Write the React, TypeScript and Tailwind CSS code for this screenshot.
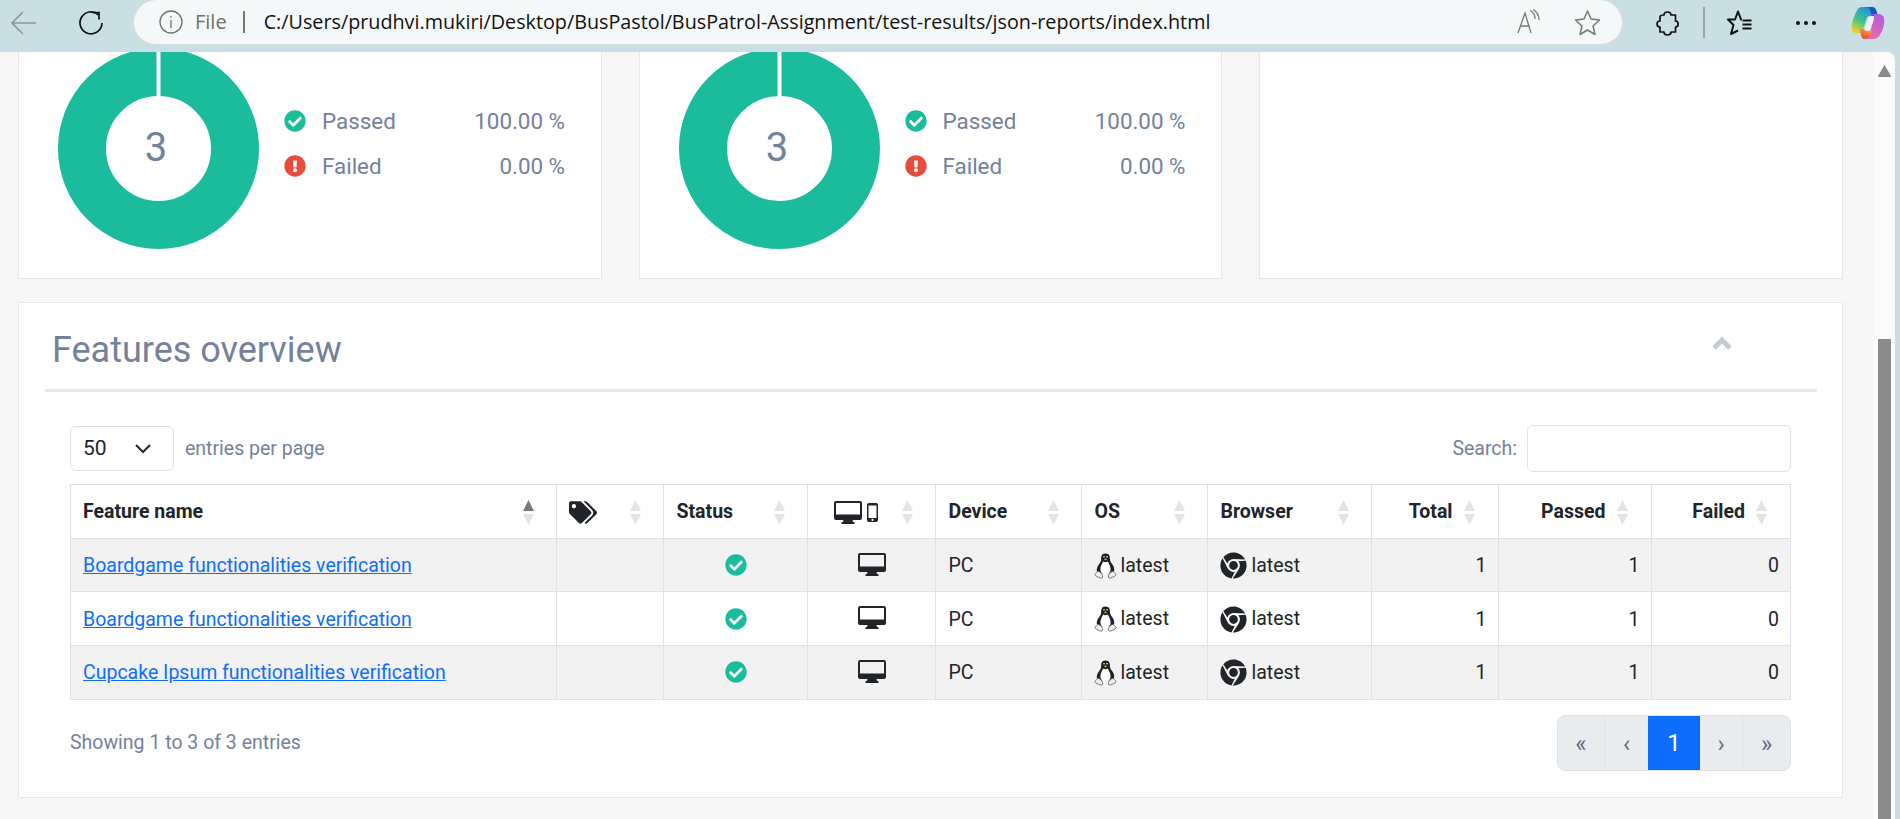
import React from "react";
import { FaCheckCircle, FaExclamationCircle, FaTags, FaChrome } from "react-icons/fa";

const font = { fontFamily: "Roboto, sans-serif" };

function SortArrows({ active = false }: { active?: boolean }) {
  return (
    <span className="flex flex-col gap-[2px] shrink-0">
      <svg width="11" height="12" viewBox="0 0 11 12"><path d="M5.5 0L11 11H0Z" fill={active ? "#7a7a7a" : "#e2e4e4"} /></svg>
      <svg width="11" height="11" viewBox="0 0 11 11"><path d="M0 0H11L5.5 11Z" fill="#e2e4e4" /></svg>
    </span>
  );
}

function Donut() {
  return (
    <svg width="201" height="201" viewBox="0 0 201 201" className="shrink-0">
      <circle cx="100.5" cy="100.5" r="76.5" fill="none" stroke="#1abc9c" strokeWidth="48" />
      <rect x="98.5" y="0" width="4" height="48" fill="#ffffff" />
      <text x="98" y="113" textAnchor="middle" fontSize="40" fill="#73819b" fontFamily="Roboto, sans-serif">3</text>
    </svg>
  );
}

function Legend() {
  return (
    <div className="w-[280px] flex flex-col gap-[18px] text-[22.4px] leading-[27px] text-[#73819b]" style={font}>
      <div className="flex items-center">
        <FaCheckCircle className="text-[#1abc9c] w-[22px] h-[22px] -ml-[1px]" />
        <span className="ml-[16px] flex-1">Passed</span>
        <span>100.00 %</span>
      </div>
      <div className="flex items-center">
        <FaExclamationCircle className="text-[#e74c3c] w-[22px] h-[22px] -ml-[1px]" />
        <span className="ml-[16px] flex-1">Failed</span>
        <span>0.00 %</span>
      </div>
    </div>
  );
}

function ChartCard() {
  return (
    <div className="w-[583.5px] h-[227px] bg-white border-x border-b border-[#e4e7ee] pl-[39px] flex items-start">
      <div className="-mt-[4px] flex items-center">
        <Donut />
        <div className="ml-[26px] -mt-[10px]"><Legend /></div>
      </div>
    </div>
  );
}

const rows = [
  "Boardgame functionalities verification",
  "Boardgame functionalities verification",
  "Cupcake Ipsum functionalities verification",
];

const th = "border border-[#dee2e6] pl-[13px] pr-[12px] pt-[2px] h-[53.7px] font-bold text-[19.5px] leading-[24px] text-[#212529] align-middle";
const td = "border border-[#dee2e6] pl-[13px] pr-[11px] pt-[2px] h-[53.7px] text-[19.5px] leading-[24px] text-[#212529] align-middle";
const first = "border border-[#dee2e6] pl-[12px] pr-[12px] pt-[2px] h-[53.7px] text-[19.5px] leading-[24px] text-[#212529] align-middle";
const firstTh = "border border-[#dee2e6] pl-[12px] pr-[12px] pt-[2px] h-[53.7px] font-bold text-[19.5px] leading-[24px] text-[#212529] align-middle";

function Head({ children, right = false, active = false, isFirst = false }: { children: React.ReactNode; right?: boolean; active?: boolean; isFirst?: boolean }) {
  return (
    <th className={isFirst ? firstTh : th}>
      <div className={`flex items-center ${right ? "justify-end gap-[11px] pr-[11px]" : "justify-between pr-[10px]"}`}>
        {children}
        <SortArrows active={active} />
      </div>
    </th>
  );
}

function Desktop({ className = "" }: { className?: string }) {
  return (
    <svg width="28" height="23" viewBox="0 0 28 23" className={`shrink-0 ${className}`}>
      <path
        fillRule="evenodd"
        fill="#212529"
        d="M2 0H26A2 2 0 0 1 28 2V17A2 2 0 0 1 26 19H18.5L19 21H20.5V23H7.5V21H9L9.5 19H2A2 2 0 0 1 0 17V2A2 2 0 0 1 2 0ZM2 2V13.5H26V2Z"
      />
    </svg>
  );
}

function Phone() {
  return (
    <svg width="11" height="19" viewBox="0 0 11 19" className="shrink-0">
      <path
        fillRule="evenodd"
        fill="#212529"
        d="M2 0H9A2 2 0 0 1 11 2V17A2 2 0 0 1 9 19H2A2 2 0 0 1 0 17V2A2 2 0 0 1 2 0ZM1.5 2.5V15H9.5V2.5ZM5.5 15.8A1.1 1.1 0 1 0 5.5 18A1.1 1.1 0 1 0 5.5 15.8Z"
      />
    </svg>
  );
}

function Tux() {
  return (
    <svg width="23" height="26" viewBox="0 0 23 26" className="shrink-0">
      <path d="M11.5 0.5C7.5 0.5 7 3.5 7.2 6.5C7.3 9 4.8 11 3.6 13.5C2.5 16 2.3 18 4 20.5H19C20.7 18 20.5 15.5 19.4 13C18.2 10.5 15.8 9 15.9 6C16 3.5 15.5 0.5 11.5 0.5Z" fill="#1d2024" />
      <path d="M9.2 8.5C8 11 6.6 13 6.4 16C6.3 18.5 7.8 21.5 11.5 21.5C15.2 21.5 16.7 18.5 16.6 16C16.4 13 15 11 13.8 8.5C12.4 9.5 10.6 9.5 9.2 8.5Z" fill="#ffffff" />
      <path d="M9.8 6.2L11.5 5.2L13.2 6.2L11.5 7.6Z" fill="#c9a227" />
      <circle cx="10" cy="3.8" r="0.8" fill="#ffffff" />
      <circle cx="13" cy="3.8" r="0.8" fill="#ffffff" />
      <path d="M3.5 18.5C2.5 20 1 20.5 1 21.5C1 23 4 24 6.5 25C8 25.5 9 24.5 8.6 23C8 21 6 18 3.5 18.5Z" fill="#f2f0e6" stroke="#4a5a70" strokeWidth="0.8" />
      <path d="M19.5 18.5C20.5 20 22 20.5 22 21.5C22 23 19 24 16.5 25C15 25.5 14 24.5 14.4 23C15 21 17 18 19.5 18.5Z" fill="#f2f0e6" stroke="#4a5a70" strokeWidth="0.8" />
    </svg>
  );
}

function Copilot() {
  return (
    <svg width="34" height="32" viewBox="0 0 34 32" className="ml-[34px]">
      <defs>
        <linearGradient id="cpa" x1="0.7" y1="0" x2="0.2" y2="1"><stop offset="0" stopColor="#1c8fe8" /><stop offset="0.55" stopColor="#3fc28a" /><stop offset="1" stopColor="#f5d02f" /></linearGradient>
        <linearGradient id="cpb" x1="0.8" y1="0" x2="0.3" y2="1"><stop offset="0" stopColor="#b35be0" /><stop offset="1" stopColor="#f06aa6" /></linearGradient>
        <linearGradient id="cpc" x1="0.8" y1="0" x2="0.2" y2="1"><stop offset="0" stopColor="#f9a03f" /><stop offset="1" stopColor="#ea3f36" /></linearGradient>
      </defs>
      <path d="M11 0H21C23 0 24.5 1 25 3L27 9H19C17 9 16 10 15.5 12L11.5 24C11 25.5 9.5 26 8 26H5C2.5 26 0.5 24 0.5 21C0.5 16 3 9 6 3.5C7 1.5 9 0 11 0Z" fill="url(#cpa)" />
      <path d="M14 0H21C23 0 24.5 1 25 3L27 9H21L19 3C18.5 1 16.5 0 14 0Z" fill="#1656c9" />
      <path d="M20 7H27C30 7 32 8 33 11C34 16 32 24 28.5 28.5C27 30.5 25 32 22.5 32H13C15.5 32 17 30.5 17.5 29L22 15C22.5 13 23 11 23 10C23 8 22 7 20 7Z" fill="url(#cpb)" />
      <path d="M9 22H15L16 25.5C16.5 27 17 31 13 32H12C10 30 9.5 26 9 22Z" fill="url(#cpc)" />
      <path d="M14 24H21C19 29 17.5 32 13 32C15 30 14 27 14 24Z" fill="url(#cpc)" />
      <path d="M18.5 9.5H23.2C22.5 14 20.5 19 19 23.5H13.5C15 19 16.5 13 18.5 9.5Z" fill="#eef3f2" />
    </svg>
  );
}

function App() {
  const chromeFont = { fontFamily: "'Open Sans', sans-serif" };
  return (
    <div className="w-[1900px] h-[819px] overflow-hidden bg-[#c9dfe3] flex flex-col" style={font}>
      <header className="h-[52px] shrink-0 flex items-start bg-[#c9dfe3] relative z-10">
        <div className="w-[133px] h-[45px] flex items-center shrink-0">
          <svg width="26" height="24" viewBox="0 0 26 24" className="ml-[11px]" fill="none" stroke="#8b9a9e" strokeWidth="1.6"><path d="M1 12H25M12 1L1 12L12 23" /></svg>
          <svg width="26" height="26" viewBox="0 0 26 26" className="ml-[41px]" fill="none" stroke="#111" strokeWidth="1.7"><path d="M20.5 4.8A11 11 0 1 0 24 13" /><path d="M14 2.5H21V9.5" /></svg>
        </div>
        <div className="w-[1490px] h-[46px] bg-[#f5f8f9] rounded-r-[23px] rounded-l-[23px] border border-t-0 border-[#d5dcdd] border-b-2 flex items-center shrink-0">
          <svg width="24" height="24" viewBox="0 0 24 24" className="ml-[25px]" fill="none" stroke="#6f6f6f" strokeWidth="1.3"><circle cx="12" cy="12" r="11" /><path d="M12 10V18M12 6V7.6" /></svg>
          <span className="ml-[12px] text-[20px] text-[#6f6f6f]" style={chromeFont}>File</span>
          <span className="ml-[16px] w-[2px] h-[22px] bg-[#777]" />
          <span className="ml-[19px] text-[19.75px] text-[#111]" style={chromeFont}>C:/Users/prudhvi.mukiri/Desktop/BusPastol/BusPatrol-Assignment/test-results/json-reports/index.html</span>
          <span className="flex-1" />
          <svg width="26" height="26" viewBox="0 0 26 26" fill="none" stroke="#777" strokeWidth="1.3"><path d="M2 24L9 4L15 24M4.5 17H13M14 1.5A9 9 0 0 1 19 10M17 0.5A12 12 0 0 1 23 11" /></svg>
          <svg width="27" height="27" viewBox="0 0 27 27" className="ml-[32px] mr-[21px]" fill="none" stroke="#777" strokeWidth="1.5"><path d="M13.5 2L17 10L25.5 11L19 17L21 25.5L13.5 21L6 25.5L8 17L1.5 11L10 10Z" strokeLinejoin="round" /></svg>
        </div>
        <div className="flex-1 h-[45px] flex items-center">
          <svg width="24" height="26" viewBox="0 0 24 26" className="ml-[32px]" fill="none" stroke="#111" strokeWidth="1.7" strokeLinejoin="round"><path d="M9 5C9 1 16 1 16 5H20.5V11C24 11 24 17 20.5 17V22H16C16 26 9 26 9 22H5V17C1 17 1 11 5 11V7C5 5.5 7 5 9 5Z" /></svg>
          <span className="ml-[24px] w-[2px] h-[31px] bg-[#9aa5a8]" />
          <svg width="25" height="25" viewBox="0 0 25 25" className="ml-[22px]" fill="none" stroke="#111" strokeWidth="2" strokeLinejoin="round"><path d="M15 9.5H14L11 1.5L8 9.5H1L6.5 15L4 24L11 20.5" /><path d="M15.5 10.5H24.5M15.5 14.5H24.5M15.5 18.5H24.5" /></svg>
          <svg width="22" height="6" viewBox="0 0 22 6" className="ml-[43px]" fill="#111"><circle cx="3" cy="3" r="2" /><circle cx="11" cy="3" r="2" /><circle cx="19" cy="3" r="2" /></svg>
          <Copilot />
        </div>
      </header>

      <div className="flex-1 flex min-h-0">
        <main className="w-[1873px] bg-[#f6f6f6] pl-[18px] overflow-hidden">
          <div className="flex gap-[37px]">
            <ChartCard />
            <ChartCard />
            <div className="w-[583.5px] h-[227px] bg-white border-x border-b border-[#e4e7ee]" />
          </div>

          <section className="mt-[23px] w-[1825px] h-[496px] bg-white border border-[#e4e7ee] pt-[24px] pl-[26px] pr-[25px]">
            <div className="flex items-start justify-between h-[65px] border-b-[3px] border-[#e4e7ee] pl-[7px]">
              <h2 className="text-[36px] leading-[46px] text-[#73819b] font-normal">Features overview</h2>
              <svg width="20" height="14" viewBox="0 0 20 14" className="mt-[9px] mr-[85px]" fill="none" stroke="#c6cbcf" strokeWidth="5"><path d="M2 12L10 4L18 12" /></svg>
            </div>

            <div className="ml-[25px] w-[1721px]">
              <div className="mt-[33px] flex items-center justify-between h-[47px]">
                <div className="flex items-center">
                  <div className="w-[104px] h-[45px] border border-[#dee2e6] rounded-[6px] flex items-center justify-between pl-[12px] pr-[22px] text-[21px] text-[#212529]">
                    <span>50</span>
                    <svg width="16" height="10" viewBox="0 0 16 10" fill="none" stroke="#212529" strokeWidth="2"><path d="M1 1L8 8L15 1" /></svg>
                  </div>
                  <span className="ml-[11px] text-[19.5px] text-[#73819b]">entries per page</span>
                </div>
                <div className="flex items-center">
                  <span className="text-[19.5px] text-[#73819b]">Search:</span>
                  <div className="ml-[10px] w-[264px] h-[47px] border border-[#dee2e6] rounded-[6px] bg-white" />
                </div>
              </div>

              <table className="mt-[12px] w-[1720px] table-fixed border-collapse">
                <colgroup>
                  <col className="w-[485.5px]" /><col className="w-[107px]" /><col className="w-[144px]" /><col className="w-[128px]" /><col className="w-[146px]" /><col className="w-[126px]" /><col className="w-[164px]" /><col className="w-[127px]" /><col className="w-[153px]" /><col className="w-[139.5px]" />
                </colgroup>
                <thead>
                  <tr className="bg-white">
                    <Head active isFirst><span className="text-left">Feature name</span></Head>
                    <Head><FaTags className="w-[28px] h-[25px] text-[#212529] -ml-[1px]" /></Head>
                    <Head>Status</Head>
                    <Head>
                      <span className="flex items-center gap-[5px] ml-[13px]">
                        <Desktop />
                        <Phone />
                      </span>
                    </Head>
                    <Head>Device</Head>
                    <Head>OS</Head>
                    <Head>Browser</Head>
                    <Head right>Total</Head>
                    <Head right>Passed</Head>
                    <Head right>Failed</Head>
                  </tr>
                </thead>
                <tbody>
                  {rows.map((name, i) => (
                    <tr key={i} className={i % 2 === 0 ? "bg-[#f2f2f2]" : "bg-white"}>
                      <td className={first}><a className="text-[#0d6efd] underline">{name}</a></td>
                      <td className={td} />
                      <td className={td}><FaCheckCircle className="mx-auto -mt-[2px] w-[22px] h-[22px] text-[#1abc9c]" /></td>
                      <td className={td}><Desktop className="mx-auto -mt-[4px]" /></td>
                      <td className={td}>PC</td>
                      <td className={td}><div className="flex items-center gap-[4px] -ml-[1px] -mt-[1px]"><Tux />latest</div></td>
                      <td className={td}><div className="flex items-center gap-[5px] -ml-[1px] -mt-[1px]"><FaChrome className="w-[27px] h-[27px] text-[#212529] shrink-0" />latest</div></td>
                      <td className={`${td} text-right`}>1</td>
                      <td className={`${td} text-right`}>1</td>
                      <td className={`${td} text-right`}>0</td>
                    </tr>
                  ))}
                </tbody>
              </table>

              <div className="mt-[15px] flex items-start justify-between">
                <span className="mt-[13px] text-[19.5px] text-[#73819b]">Showing 1 to 3 of 3 entries</span>
                <div className="flex h-[56px] w-[234px] rounded-[8px] overflow-hidden border border-[#dee2e6] bg-[#e9ecef] text-[#5f6b80] text-[24px]">
                  <span className="w-[47px] pt-[2px] flex items-center justify-center border-r border-[#dee2e6]">«</span>
                  <span className="w-[43px] pt-[2px] flex items-center justify-center">‹</span>
                  <span className="w-[52px] flex items-center justify-center bg-[#0d6efd] text-white text-[24px]">1</span>
                  <span className="w-[43px] pt-[2px] flex items-center justify-center border-r border-[#dee2e6]">›</span>
                  <span className="flex-1 pt-[2px] flex items-center justify-center">»</span>
                </div>
              </div>
            </div>
          </section>
        </main>

        <aside className="w-[22px] bg-[#fbfbfb] rounded-tr-[8px] flex flex-col items-center pt-[13px]">
          <svg width="13" height="12" viewBox="0 0 13 12"><path d="M6.5 0L13 11Q13 12 12 12H1Q0 12 0 11Z" fill="#8a8a8a" /></svg>
          <div className="mt-[262px] w-[13px] flex-1 bg-[#8b8b8b]" />
        </aside>
        <div className="flex-1 bg-[#c9dfe3]" />
      </div>
    </div>
  );
}

export default App;
